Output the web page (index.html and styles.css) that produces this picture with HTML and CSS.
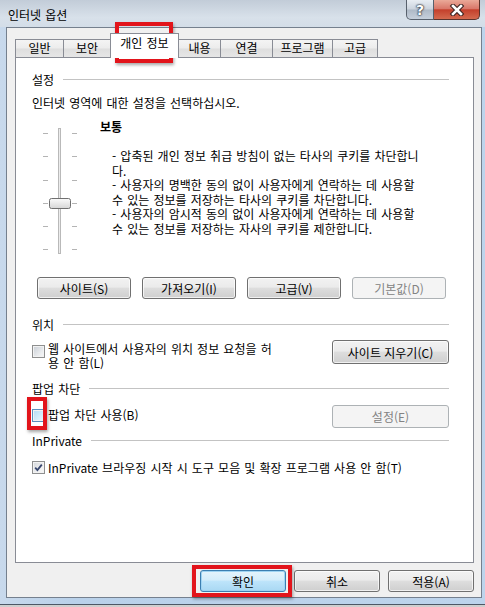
FILE: index.html
```html
<!DOCTYPE html>
<html lang="ko">
<head>
    <meta charset="UTF-8">
    <meta name="viewport" content="width=device-width, initial-scale=1.0">
    <title>인터넷 옵션</title>
    <link rel="stylesheet" href="styles.css">
</head>
<body>
    <div class="window">
        <div class="titlebar">
            <span class="title">인터넷 옵션</span>
            <div class="caption-buttons">
                <span class="cap-btn help">?</span>
                <span class="cap-btn close">
                    <svg width="16" height="12" viewBox="0 0 16 12">
                        <path d="M4 2 L12 10 M12 2 L4 10" stroke="#3a2320" stroke-width="4.6" stroke-linecap="square"/>
                        <path d="M4 2 L12 10 M12 2 L4 10" stroke="#fff" stroke-width="2.6" stroke-linecap="square"/>
                    </svg>
                </span>
            </div>
        </div>

        <div class="client">
            <div class="tabs">
                <div class="tab w-general">일반</div>
                <div class="tab w-security">보안</div>
                <div class="tab w-privacy active">개인 정보</div>
                <div class="tab w-content">내용</div>
                <div class="tab w-connect">연결</div>
                <div class="tab w-programs">프로그램</div>
                <div class="tab w-advanced">고급</div>
            </div>

            <div class="panel">
                <div class="group-head">설정</div>
                <p class="hint">인터넷 영역에 대한 설정을 선택하십시오.</p>

                <div class="level">
                    <svg class="slider" width="40" height="130" viewBox="0 0 40 130">
                        <defs>
                            <linearGradient id="thumb" x1="0" y1="0" x2="0" y2="1">
                                <stop offset="0" stop-color="#fbfbfb"/>
                                <stop offset="1" stop-color="#d6d6d6"/>
                            </linearGradient>
                        </defs>
                        <g stroke="#b4b4b4" stroke-width="1">
                            <path d="M3 8.5h5M32 8.5h5"/>
                            <path d="M3 31.5h5M32 31.5h5"/>
                            <path d="M3 55.5h5M32 55.5h5"/>
                            <path d="M3 78.5h5M32 78.5h5"/>
                            <path d="M3 101.5h5M32 101.5h5"/>
                            <path d="M3 124.5h5M32 124.5h5"/>
                        </g>
                        <rect x="18.5" y="3.5" width="2" height="125" fill="#ececec" stroke="#b9b9b9"/>
                        <rect x="9.5" y="73.5" width="21" height="10" rx="2" fill="url(#thumb)" stroke="#6f6f6f"/>
                    </svg>
                    <div class="level-text">
                        <div class="level-name">보통</div>
                        <div class="level-desc">- 압축된 개인 정보 취급 방침이 없는 타사의 쿠키를 차단합니<br>다.<br>- 사용자의 명백한 동의 없이 사용자에게 연락하는 데 사용할<br>수 있는 정보를 저장하는 타사의 쿠키를 차단합니다.<br>- 사용자의 암시적 동의 없이 사용자에게 연락하는 데 사용할<br>수 있는 정보를 저장하는 자사의 쿠키를 제한합니다.</div>
                    </div>
                </div>

                <div class="btn-row">
                    <button class="btn">사이트(S)</button>
                    <button class="btn">가져오기(I)</button>
                    <button class="btn">고급(V)</button>
                    <button class="btn" disabled>기본값(D)</button>
                </div>

                <div class="group-head head-location">위치</div>
                <div class="opt-row row-location">
                    <label class="check">
                        <span class="box"></span>
                        <span class="check-text">웹 사이트에서 사용자의 위치 정보 요청을 허<br>용 안 함(L)</span>
                    </label>
                    <button class="btn side-btn">사이트 지우기(C)</button>
                </div>

                <div class="group-head head-popup">팝업 차단</div>
                <div class="opt-row row-popup">
                    <label class="check">
                        <span class="box hover"></span>
                        <span class="check-text">팝업 차단 사용(B)</span>
                    </label>
                    <button class="btn side-btn" disabled>설정(E)</button>
                </div>

                <div class="group-head head-private">InPrivate</div>
                <div class="opt-row row-private">
                    <label class="check">
                        <span class="box checked">
                            <svg width="9" height="9" viewBox="0 0 9 9">
                                <path d="M1.2 4.6 L3.4 7 L7.8 1.6" fill="none" stroke="#37466e" stroke-width="1.8"/>
                            </svg>
                        </span>
                        <span class="check-text">InPrivate 브라우징 시작 시 도구 모음 및 확장 프로그램 사용 안 함(T)</span>
                    </label>
                </div>
            </div>

            <div class="dialog-buttons">
                <button class="btn dlg default">확인</button>
                <button class="btn dlg">취소</button>
                <button class="btn dlg">적용(A)</button>
            </div>
        </div>

        <!-- red annotation frames -->
        <div class="mark mark-tab"></div>
        <div class="mark mark-popup"></div>
        <div class="mark mark-ok"></div>
    </div>
</body>
</html>
```

FILE: styles.css
```css
* {
    box-sizing: border-box;
}

body {
    margin: 0;
    background: #cfcfcf;
    font-family: "Noto Sans CJK KR", "Noto Sans", sans-serif;
    font-size: 12px;
    word-spacing: 0.8px;
    color: #000;
}

/* window frame */
.window {
    position: relative;
    width: 485px;
    height: 605px;
    display: flex;
    flex-direction: column;
    background: linear-gradient(to right, #c8d9ec, #b9d1ea 15%, #bdd4ec);
    border-bottom: 1px solid #4d5866;
}

.titlebar {
    height: 27px;
    display: flex;
    padding: 0 5px 0 8px;
    background: linear-gradient(#c2ccd8, #d8e1ea 65%, #d3dde8);
}

.title {
    line-height: 30px;
}

.caption-buttons {
    margin-left: auto;
    display: flex;
    height: 20px;
}

.cap-btn {
    display: flex;
    align-items: center;
    justify-content: center;
    border: 1px solid #57606c;
    border-top: none;
}

.help {
    width: 28px;
    border-radius: 0 0 0 5px;
    background: linear-gradient(#e8edf3, #cbd3dd 48%, #aeb9c6 52%, #c6d0dc);
    color: #fff;
    font: bold 14px "DejaVu Sans", sans-serif;
    text-shadow: 0 0 1px #2a323d, 0 0 2px #2a323d, 0 0 2px #2a323d;
}

.close {
    width: 46px;
    border-left: none;
    border-color: #5b332c;
    border-radius: 0 0 5px 0;
    background: linear-gradient(#eaa998, #d9786a 45%, #c4402c 52%, #d46a4f);
}

/* client area */
.client {
    height: 571px;
    margin: 0 3px 0 6px;
    border: 1px solid #75808e;
    background: #f0f0f0;
    padding: 4px 7px 0 8px;
    display: flex;
    flex-direction: column;
}

.tabs {
    display: flex;
    align-items: flex-end;
    height: 25px;
    position: relative;
    z-index: 1;
}

.tab {
    height: 18px;
    margin-left: -1px;
    border: 1px solid #898c95;
    border-bottom: none;
    background: linear-gradient(#f4f4f4, #ececec 48%, #dedede 52%, #e6e6e6);
    text-align: center;
    line-height: 16px;
    white-space: nowrap;
}

.tab:first-child {
    margin-left: 0;
}

.tab.active {
    height: 25px;
    margin-bottom: -1px;
    background: #fff;
    line-height: 18px;
    position: relative;
}

.w-general { width: 49px; }
.w-security { width: 48px; }
.w-privacy { width: 69px; }
.w-content { width: 43px; }
.w-connect { width: 53px; }
.w-programs { width: 61px; }
.w-advanced { width: 46px; }

.panel {
    height: 506px;
    border: 1px solid #898c95;
    background: #fff;
    padding: 14px 24px 0 16px;
}

.group-head {
    display: flex;
    align-items: center;
    gap: 9px;
    line-height: 16px;
}

.group-head::after {
    content: "";
    flex: 1;
    border-top: 1px solid #c3c3c3;
    margin-top: -1px;
}

.hint {
    margin: 7px 0 0;
    line-height: 16px;
}

.level {
    display: flex;
    margin-top: 8px;
}

.slider {
    display: block;
    flex-shrink: 0;
    margin: 6px 0 0 8px;
}

.level-text {
    margin-left: 20px;
}

.level-name {
    font-weight: bold;
    line-height: 16px;
}

.level-desc {
    margin-top: 14px;
    padding-left: 12px;
    line-height: 14.5px;
    white-space: nowrap;
}

.btn-row {
    display: flex;
    gap: 11px;
    margin: 22px 0 0 5px;
}

.btn {
    width: 94px;
    height: 22px;
    padding: 0;
    border: 1px solid #707070;
    border-radius: 3px;
    background: linear-gradient(#f2f2f2, #ebebeb 45%, #dddddd 52%, #cfcfcf);
    box-shadow: inset 0 0 0 1px rgba(255, 255, 255, 0.7);
    font: inherit;
    line-height: 19px;
    color: #000;
}

.btn:disabled {
    border-color: #adb2b5;
    background: #f4f4f4;
    box-shadow: none;
    color: #838383;
}

.head-location { margin-top: 18px; }
.head-popup { margin-top: 11px; }
.head-private { margin-top: 5px; }

.opt-row {
    display: flex;
    align-items: flex-start;
}

.row-location { margin-top: 7px; }
.row-popup { margin-top: 8px; }
.row-private { margin-top: 12px; }

.check {
    display: flex;
    align-items: flex-start;
    gap: 3px;
}

.check-text {
    line-height: 14px;
    white-space: nowrap;
}

.box {
    width: 13px;
    height: 13px;
    flex-shrink: 0;
    display: flex;
    align-items: center;
    justify-content: center;
    border: 1px solid #8e8f8f;
    background: linear-gradient(135deg, #c9ced5, #eceef0 70%, #f6f6f6);
    box-shadow: inset 0 0 0 1px #f2f2f2;
}

.box.hover {
    border-color: #5a8fbd;
    background: linear-gradient(135deg, #b1dcf6, #daf0fc 70%, #e9f7fe);
}

.box.checked {
    background: linear-gradient(135deg, #d3d7dc, #f2f2f2 70%, #f8f8f8);
}

.row-location .box { margin-top: 5px; }
.row-location .check-text { margin-top: 2px; }
.row-popup .box { margin-top: 4px; }
.row-popup .check-text { margin-top: 3px; }

.side-btn {
    margin-left: auto;
    width: 117px;
}

.row-location .side-btn { height: 24px; }
.row-popup .side-btn { height: 23px; }

.dialog-buttons {
    display: flex;
    justify-content: flex-end;
    gap: 8px;
    margin-top: 7px;
}

.btn.dlg {
    width: 86px;
}

.btn.default {
    border-color: #3c7fb1;
    background: linear-gradient(#e5f4fc, #d4edfb 45%, #bde4fa 52%, #a9d8f3);
    box-shadow: inset 0 0 0 1px #9fd4f3;
}

/* red annotation frames */
.mark {
    position: absolute;
    border: 4px solid #e2141b;
    box-shadow: 1px 2px 3px rgba(0, 0, 0, 0.35);
}

.mark-tab {
    left: 115px;
    top: 22px;
    width: 58px;
    height: 41px;
}

.mark-popup {
    left: 27px;
    top: 397px;
    width: 20px;
    height: 33px;
}

.mark-ok {
    left: 192px;
    top: 565px;
    width: 100px;
    height: 32px;
}
```
